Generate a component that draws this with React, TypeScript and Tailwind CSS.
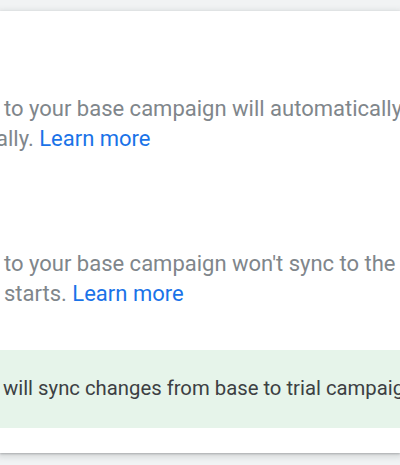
import React from "react";

export default function App() {
  return (
    <div
      className="w-[400px] h-[465px] bg-[#f1f3f4] pt-[11px] overflow-hidden"
      style={{ fontFamily: "Roboto, 'Noto Sans', sans-serif" }}
    >
      <div className="h-[442px] bg-white shadow-[0_1px_2px_rgba(60,64,67,0.3),0_2px_6px_2px_rgba(60,64,67,0.15)] pt-[83px] overflow-hidden">
        <div className="text-[22px] leading-[30px] text-[#80868b] whitespace-nowrap">
          <div className="pl-[4px]">to your base campaign will automatically</div>
          <div className="-ml-[4px]">
            ally.{" "}
            <a href="#" className="text-[#1a73e8]">
              Learn more
            </a>
          </div>
        </div>

        <div className="mt-[95px] text-[22px] leading-[30px] text-[#80868b] whitespace-nowrap">
          <div className="pl-[4px]">to your base campaign won't sync to the</div>
          <div className="pl-[4px]">
            starts.{" "}
            <a href="#" className="text-[#1a73e8]">
              Learn more
            </a>
          </div>
        </div>

        <div className="mt-[41px] h-[78px] bg-[#e6f4ea] flex items-center pl-[3px] pb-[2px] whitespace-nowrap text-[20.3px] text-[#3c4043]">
          will sync changes from base to trial campaign
        </div>
      </div>
    </div>
  );
}
